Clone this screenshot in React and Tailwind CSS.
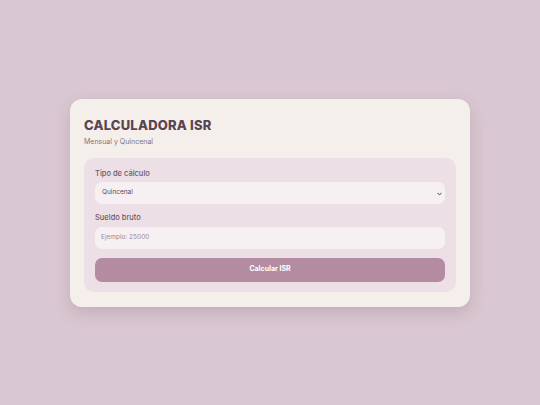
import React from "react";

export default function App() {
  const font = { fontFamily: "Inter, 'Noto Sans', sans-serif" };
  return (
    <div
      className="min-h-screen w-full flex items-center justify-center bg-[#d9c7d1]"
      style={font}
    >
      <div className="w-[400px] rounded-[12px] bg-[#f4efea] px-[14px] pt-[16px] pb-[15px] shadow-[0_6px_16px_rgba(90,60,80,0.18)]">
        <h1 className="text-[13px] leading-[20px] font-extrabold text-[#5a4452] tracking-[0.2px]">
          CALCULADORA ISR
        </h1>
        <p className="text-[7px] leading-[12px] text-[#85737e] mt-[1px]">
          Mensual y Quincenal
        </p>
        <div className="mt-[10px] rounded-[10px] bg-[#ecdfe6] px-[11px] pt-[10px] pb-[10px] flex flex-col">
          <label className="text-[7.5px] leading-[11px] text-[#6f5a66] font-medium mb-[3px]">
            Tipo de cálculo
          </label>
          <div className="relative h-[22px] rounded-[7px] bg-[#f7f0f3] flex items-center pl-[7px]">
            <span className="text-[6.5px] text-[#5a4452]">Quincenal</span>
            <svg
              className="absolute right-[3px] top-[10px]"
              width="5"
              height="4"
              viewBox="0 0 5 4"
            >
              <path d="M0.5 0.8 L2.5 3 L4.5 0.8" fill="none" stroke="#5a4452" strokeWidth="1" />
            </svg>
          </div>
          <label className="mt-[8px] text-[7.5px] leading-[11px] text-[#6f5a66] font-medium mb-[4px]">
            Sueldo bruto
          </label>
          <div className="h-[22px] rounded-[7px] bg-[#f7f0f3] flex items-center pl-[6px]">
            <span className="text-[6.5px] text-[#9a8b93]">Ejemplo: 25000</span>
          </div>
          <button className="mt-[9px] h-[24px] rounded-[7px] bg-[#b48ca2] text-white text-[7px] font-bold">
            Calcular ISR
          </button>
        </div>
      </div>
    </div>
  );
}
